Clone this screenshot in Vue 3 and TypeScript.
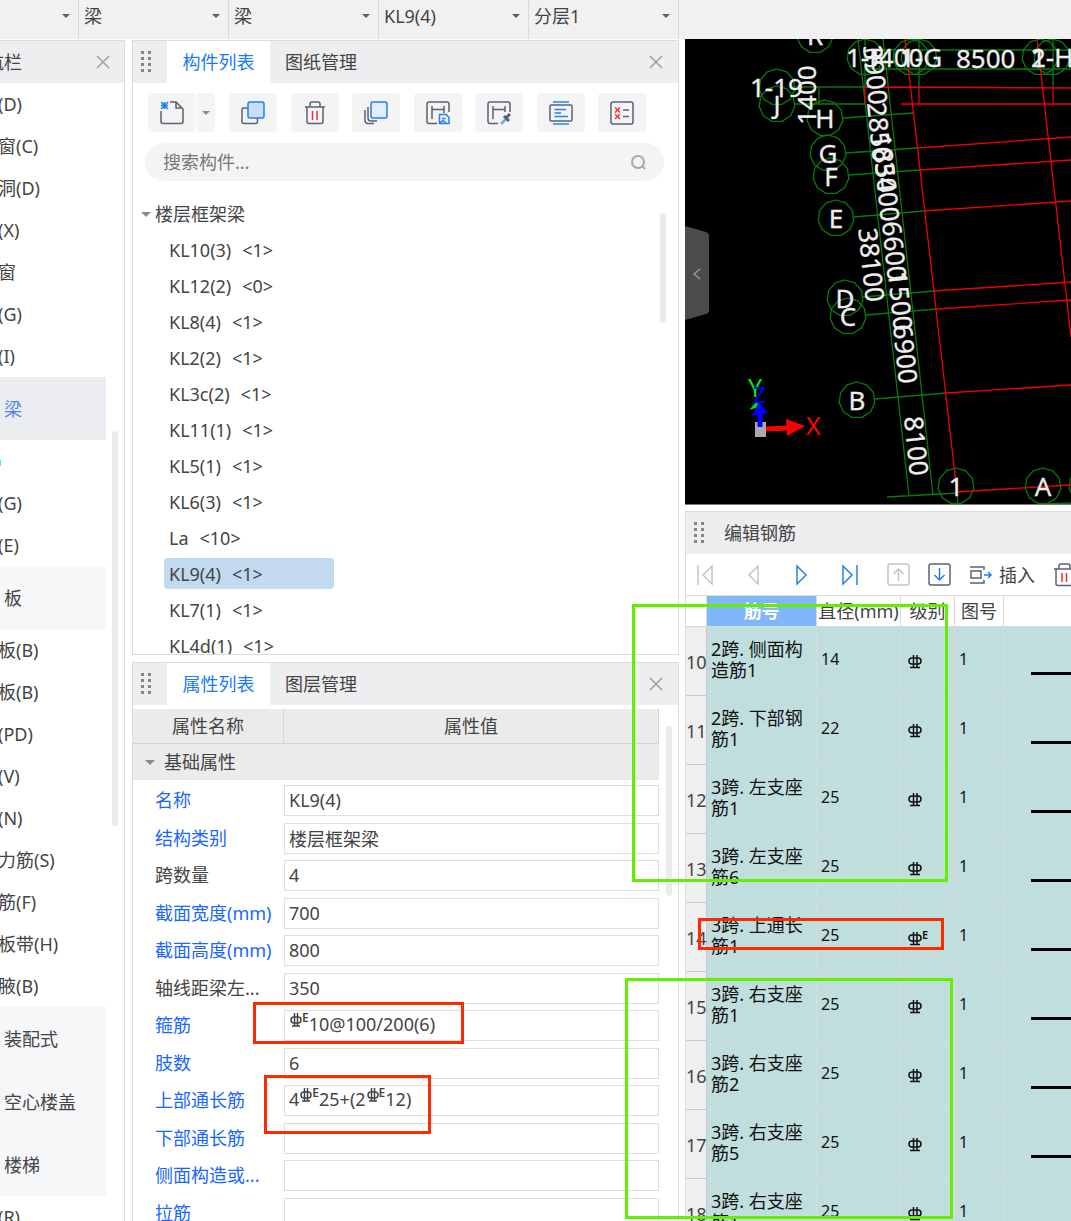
<script setup lang="ts">
import { ref } from 'vue'

interface NavItem {
  text: string
  kind: 'row' | 'group' | 'active' | 'icon'
}
interface Prop {
  name: string
  value: string
  editable: boolean
}
interface Rebar {
  no: number
  name: string[]
  diameter: number
  seismic: boolean
  shape: number
}
interface Axis {
  x: number
  y: number
  label: string
}

const selectors = ref([
  { label: '楼层', value: '' },
  { label: '构件类型', value: '梁' },
  { label: '构件种类', value: '梁' },
  { label: '构件', value: 'KL9(4)' },
  { label: '分层', value: '分层1' },
])

const row = (text: string): NavItem => ({ text, kind: 'row' })
const group = (text: string): NavItem => ({ text, kind: 'group' })
const nav: NavItem[] = [
  row('(D)'), row('窗(C)'), row('洞(D)'), row('(X)'), row('窗'), row('(G)'), row('(I)'),
  { text: '梁', kind: 'active' },
  { text: '', kind: 'icon' }, row('(G)'), row('(E)'),
  group('板'),
  row('板(B)'), row('板(B)'), row('(PD)'), row('(V)'), row('(N)'), row('力筋(S)'), row('筋(F)'), row('板带(H)'), row('腋(B)'),
  group('装配式'), group('空心楼盖'), group('楼梯'),
  row('(R)'),
]

const members = [
  ['KL10(3)', 1], ['KL12(2)', 0], ['KL8(4)', 1], ['KL2(2)', 1], ['KL3c(2)', 1], ['KL11(1)', 1],
  ['KL5(1)', 1], ['KL6(3)', 1], ['La', 10], ['KL9(4)', 1], ['KL7(1)', 1], ['KL4d(1)', 1],
] as const
const selected = ref('KL9(4)')

// "#" in a value stands for the seismic HRB400E rebar sign.
const props = ref<Prop[]>([
  { name: '名称', value: 'KL9(4)', editable: true },
  { name: '结构类别', value: '楼层框架梁', editable: true },
  { name: '跨数量', value: '4', editable: false },
  { name: '截面宽度(mm)', value: '700', editable: true },
  { name: '截面高度(mm)', value: '800', editable: true },
  { name: '轴线距梁左...', value: '350', editable: false },
  { name: '箍筋', value: '#10@100/200(6)', editable: true },
  { name: '肢数', value: '6', editable: true },
  { name: '上部通长筋', value: '4#25+(2#12)', editable: true },
  { name: '下部通长筋', value: '', editable: true },
  { name: '侧面构造或...', value: '', editable: true },
  { name: '拉筋', value: '', editable: true },
])

const bars: Rebar[] = [
  { no: 10, name: ['2跨. 侧面构', '造筋1'], diameter: 14, seismic: false, shape: 1 },
  { no: 11, name: ['2跨. 下部钢', '筋1'], diameter: 22, seismic: false, shape: 1 },
  { no: 12, name: ['3跨. 左支座', '筋1'], diameter: 25, seismic: false, shape: 1 },
  { no: 13, name: ['3跨. 左支座', '筋6'], diameter: 25, seismic: false, shape: 1 },
  { no: 14, name: ['3跨. 上通长', '筋1'], diameter: 25, seismic: true, shape: 1 },
  { no: 15, name: ['3跨. 右支座', '筋1'], diameter: 25, seismic: false, shape: 1 },
  { no: 16, name: ['3跨. 右支座', '筋2'], diameter: 25, seismic: false, shape: 1 },
  { no: 17, name: ['3跨. 右支座', '筋5'], diameter: 25, seismic: false, shape: 1 },
  { no: 18, name: ['3跨. 右支座', '筋1'], diameter: 25, seismic: false, shape: 1 },
]

const axes: Axis[] = [
  { x: 815, y: 35, label: 'R' }, { x: 777, y: 87, label: '' }, { x: 777, y: 104, label: 'J' },
  { x: 825, y: 118, label: 'H' }, { x: 828, y: 153, label: 'G' }, { x: 831, y: 176, label: 'F' },
  { x: 836, y: 218, label: 'E' }, { x: 845, y: 298, label: 'D' }, { x: 848, y: 316, label: 'C' },
  { x: 857, y: 400, label: 'B' }, { x: 956, y: 486, label: '1' }, { x: 1043, y: 486, label: 'A' },
  { x: 865, y: 57, label: '' }, { x: 911, y: 57, label: '' }, { x: 919, y: 57, label: '' },
  { x: 1040, y: 57, label: '' }, { x: 1052, y: 57, label: '' }, { x: 1087, y: 486, label: '' },
]
const ring = (a: Axis): string =>
  Array.from({ length: 11 }, (_, i) => {
    const t = (i / 11) * Math.PI * 2 - Math.PI / 2
    return `${(a.x + 18 * Math.cos(t)).toFixed(1)},${(a.y + 18 * Math.sin(t)).toFixed(1)}`
  }).join(' ')

const spans = [
  { t: '3900', x: 875, y: 75 }, { t: '2850', x: 879, y: 132 }, { t: '1850', x: 884, y: 163 },
  { t: '3400', x: 887, y: 192 }, { t: '6600', x: 894, y: 251 }, { t: '1500', x: 900, y: 301 },
  { t: '6900', x: 905, y: 354 }, { t: '8100', x: 916, y: 446 }, { t: '38100', x: 871, y: 265 },
]
const labels = [
  { t: '1-19', x: 750, y: 97 }, { t: '1-F', x: 846, y: 67 }, { t: '3400', x: 864, y: 67 },
  { t: '1-G', x: 900, y: 67 }, { t: '8500', x: 956, y: 68 }, { t: '2', x: 1031, y: 67 }, { t: '1-H', x: 1031, y: 67 },
]
</script>

<template>
  <div class="app">
    <header class="topbar">
      <label v-for="(s, i) in selectors" :key="i" class="picker" :class="{ cut: i === 0 }">
        <select v-model="s.value" :aria-label="s.label">
          <option :value="s.value">{{ s.value }}</option>
        </select>
      </label>
    </header>

    <main class="work">
      <aside class="nav">
        <div class="bar">
          <h2 class="nav-title">航栏</h2>
          <button class="close" aria-label="关闭">
            <svg width="14" height="14"><path d="M1 1L13 13M13 1L1 13" /></svg>
          </button>
        </div>
        <ul class="nav-list">
          <li v-for="(n, i) in nav" :key="i" :class="n.kind">{{ n.text }}</li>
        </ul>
        <i class="scroll nav-scroll"></i>
      </aside>

      <section class="middle">
        <div class="panel members">
          <div class="bar">
            <svg class="grip" width="11" height="22"><path d="M1.500 0V22M8.500 0V22" /></svg>
            <button class="tab on">构件列表</button>
            <button class="tab">图纸管理</button>
            <button class="close" aria-label="关闭">
              <svg width="14" height="14"><path d="M1 1L13 13M13 1L1 13" /></svg>
            </button>
          </div>

          <div class="tools">
            <div class="split">
              <button aria-label="新建">
                <svg width="24" height="24" viewBox="0 0 24 24">
                  <path class="ink" d="M1 10V20.500Q1 22.500 3 22.500H21Q23 22.500 23 20.500V8L16 1H10M16 1V7H22" />
                  <path class="blue" d="M1 1L8 8M8 1L1 8M4.500 1V8M1 4.500H8" />
                </svg>
              </button>
              <button class="more" aria-label="新建选项"><i class="caret"></i></button>
            </div>
            <div class="row-tools">
              <button aria-label="复制">
                <svg width="24" height="24" viewBox="0 0 24 24">
                  <path class="ink" d="M7 7H3Q1 7 1 9V20.500Q1 22.500 3 22.500H14.500Q16.500 22.500 16.500 20.500V17" />
                  <rect class="blue" x="7" y="1" width="16" height="16" rx="2" fill="#c9ddf5" />
                </svg>
              </button>
              <button aria-label="删除">
                <svg width="24" height="24" viewBox="0 0 24 24">
                  <path class="ink" d="M2 6H22M4 6V20.500Q4 22.500 6 22.500H18Q20 22.500 20 20.500V6M7 6V3Q7 1 9 1H15Q17 1 17 3V6" />
                  <path class="red" d="M9.500 10V19M14 10V19" />
                </svg>
              </button>
              <button aria-label="层间复制">
                <svg width="24" height="24" viewBox="0 0 24 24">
                  <path class="ink" d="M4 6V17Q4 20 7 20H13M1 9V19Q1 22.500 4 22.500H10" />
                  <rect class="blue" x="7" y="1" width="16" height="16" rx="2" fill="#e2eefe" />
                </svg>
              </button>
              <button aria-label="构件存盘">
                <svg width="24" height="24" viewBox="0 0 24 24">
                  <path class="ink" d="M23 11V3Q23 1 21 1H3Q1 1 1 3V20.500Q1 22.500 3 22.500H11M6 5V18M18 5V12M6 8.500H18" />
                  <path class="blue" d="M13.500 13.500H20L23 16.500V22.500H13.500ZM16 17.500H19.500M14 22L17 19.500L20 22" />
                </svg>
              </button>
              <button aria-label="构件提取">
                <svg width="24" height="24" viewBox="0 0 24 24">
                  <path class="ink" d="M23 11V3Q23 1 21 1H3Q1 1 1 3V20.500Q1 22.500 3 22.500H11M6 5V18M18 5V11M6 8.500H18" />
                  <path d="M14 23L19 18" stroke="#7aa5e6" stroke-width="2.500" />
                  <path d="M17 15L22 20M18 18L23 13" stroke="#596273" stroke-width="3" />
                </svg>
              </button>
              <button aria-label="图元存盘">
                <svg width="24" height="24" viewBox="0 0 24 24">
                  <rect class="ink" x="1" y="4" width="22" height="16" rx="1" />
                  <path class="blue" d="M4 1H20M4 23H20M5.500 8.500H17M5.500 12H12M5.500 15.500H19" />
                </svg>
              </button>
              <button aria-label="检查">
                <svg width="24" height="24" viewBox="0 0 24 24">
                  <rect class="ink" x="1" y="1" width="22" height="22" rx="2" />
                  <path class="ink" d="M13 9H19M13 15.500H19" />
                  <path class="red" d="M5 6.500L10 11.500M10 6.500L5 11.500M5 13L10 18M10 13L5 18" />
                </svg>
              </button>
            </div>
          </div>

          <label class="search">
            <input type="text" placeholder="搜索构件..." aria-label="搜索构件" />
            <svg width="15" height="15"><circle cx="7" cy="7" r="6" /><path d="M11 11L14 14" /></svg>
          </label>

          <div class="tree">
            <div class="root"><i class="caret"></i>楼层框架梁</div>
            <ul>
              <li v-for="m in members" :key="m[0]">
                <button :class="{ on: m[0] === selected }" @click="selected = m[0]">
                  <span>{{ m[0] }}</span><span>&lt;{{ m[1] }}&gt;</span>
                </button>
              </li>
            </ul>
            <i class="scroll tree-scroll"></i>
          </div>
        </div>

        <div class="panel props">
          <div class="bar">
            <svg class="grip" width="11" height="22"><path d="M1.500 0V22M8.500 0V22" /></svg>
            <button class="tab on">属性列表</button>
            <button class="tab">图层管理</button>
            <button class="close" aria-label="关闭">
              <svg width="14" height="14"><path d="M1 1L13 13M13 1L1 13" /></svg>
            </button>
          </div>
          <div class="prop-area">
            <table class="prop-table">
              <thead>
                <tr><th class="name-col">属性名称</th><th>属性值</th></tr>
              </thead>
              <tbody>
                <tr class="category"><td colspan="2"><i class="caret"></i>基础属性</td></tr>
                <tr v-for="(p, i) in props" :key="p.name" class="prop">
                  <td :class="{ link: p.editable }"><label :for="'prop-' + i">{{ p.name }}</label></td>
                  <td>
                    <div v-if="p.value.includes('#')" :id="'prop-' + i" class="field rich" role="textbox" contenteditable="true" :aria-label="p.name">
                      <template v-for="(part, k) in p.value.split('#')" :key="k">
                        <span v-if="k > 0" class="sign">
                          <svg width="12" height="14" viewBox="0 0 12 14"><rect x="1" y="4" width="10" height="6" rx="3" /><path d="M4.500 0V13M7.500 0V13M2 13H10" /></svg><small>E</small>
                        </span><span>{{ part }}</span>
                      </template>
                    </div>
                    <input v-else :id="'prop-' + i" v-model="p.value" class="field" type="text" />
                  </td>
                </tr>
              </tbody>
            </table>
            <i class="scroll prop-scroll"></i>
          </div>
        </div>
      </section>

      <section class="right">
        <div class="view">
          <svg class="cad" width="100%" height="465">
            <g transform="translate(-685 -39)">
              <g class="green">
                <path d="M858 39L909 496M883 39L933 495M865 39V87M919 39V87M1053 39V87M865 50H1071M865 69H1071M793 87H865M795 104H865M819 87V104M843 118L913 113M846 153L917 148M849 175L920 170M854 217L924 211M863 297L934 291M866 315L937 309M875 399L946 393M887 497L957 493M957 493L958 504M1045 504L1071 503" />
                <polygon v-for="(a, i) in axes" :key="i" :points="ring(a)" />
              </g>
              <path class="dark-red" d="M919 87V104M1053 87V104" />
              <path class="line-red" d="M905 39L957 492M1037 39L1071 337M865 87V104M865 87L1071 88M901 104H1071M917 148L1071 137M920 170L1071 160M924 211L1071 201M934 291L1071 282M937 309L1071 300M946 393L1071 385M957 492L1071 485" />
              <g class="cad-text">
                <text v-for="a in axes" :key="a.label + a.x" :x="a.x" :y="a.y + 10" text-anchor="middle">{{ a.label }}</text>
                <text v-for="l in labels" :key="l.t" :x="l.x" :y="l.y">{{ l.t }}</text>
                <text v-for="s in spans" :key="s.t + s.y" y="9" text-anchor="middle" :transform="`translate(${s.x} ${s.y}) rotate(84)`">{{ s.t }}</text>
                <text y="9" text-anchor="middle" transform="translate(807 95) rotate(-90)">1400</text>
              </g>
              <path d="M749 410L757 401L759 407Z" fill="#00dd00" />
              <text class="axis-y" x="748" y="397">Y</text>
              <rect x="755" y="422" width="11" height="15" fill="#aaa" />
              <path d="M760 412V427" stroke="#00f" stroke-width="5" />
              <path d="M752 416L759 402L768 413Z" fill="#00f" />
              <text class="axis-z" x="753" y="403">Z</text>
              <path d="M766 429L788 428" stroke="#f00" stroke-width="5" />
              <path d="M786 419L805 426L787 436Z" fill="#f00" />
              <text class="axis-x" x="806" y="435">X</text>
            </g>
          </svg>
          <button class="collapse" aria-label="收起">
            <svg width="24" height="94">
              <path d="M0 0L21 6Q24 7 24 10V84Q24 87 21 88L0 94Z" fill="#4b4b4b" />
              <path d="M15 43L9 48L15 53" stroke="#999" stroke-width="1.500" fill="none" />
            </svg>
          </button>
        </div>

        <div class="rebar">
          <div class="bar">
            <svg class="grip" width="11" height="22"><path d="M1.500 0V22M8.500 0V22" /></svg>
            <h2>编辑钢筋</h2>
          </div>
          <div class="rebar-tools">
            <button class="off" aria-label="首行"><svg width="20" height="24"><path d="M3 2V22M17 3V21L8 12Z" /></svg></button>
            <button class="off" aria-label="上一行"><svg width="20" height="24"><path d="M15 3V21L6 12Z" /></svg></button>
            <button class="go" aria-label="下一行"><svg width="20" height="24"><path d="M6 3V21L15 12Z" /></svg></button>
            <button class="go" aria-label="末行"><svg width="20" height="24"><path d="M4 3V21L13 12ZM18 2V22" /></svg></button>
            <button class="off box" aria-label="上移">
              <svg width="24" height="24"><rect x="1" y="1" width="21" height="21" rx="2" /><path d="M11.500 18V6M6.500 11L11.500 6L16.500 11" /></svg>
            </button>
            <button class="go box" aria-label="下移">
              <svg width="24" height="24"><rect x="1" y="1" width="21" height="21" rx="2" stroke="#596273" /><path d="M11.500 5V17M6.500 12L11.500 17L16.500 12" /></svg>
            </button>
            <button class="insert">
              <svg width="24" height="20"><path class="ink" d="M1 2H15V5M1 18H15V15M2 6H12V13H2Z" /><path class="blue" d="M15 10H22M19 7L22 10L19 13" /></svg>插入
            </button>
            <button aria-label="删除">
              <svg width="24" height="24" viewBox="0 0 24 24">
                <path class="ink" d="M1 6H23M3 6V20.500Q3 22.500 5 22.500H18Q20 22.500 20 20.500V6M6 6V3Q6 1 8 1H15Q17 1 17 3V6" />
                <path class="red" d="M9 10V19M13.500 10V19" />
              </svg>
            </button>
          </div>
          <table class="bars">
            <colgroup><col class="c-no" /><col class="c-name" /><col class="c-dia" /><col class="c-grade" /><col class="c-shape" /><col /></colgroup>
            <thead>
              <tr><th></th><th class="on">筋号</th><th>直径(mm)</th><th>级别</th><th>图号</th><th></th></tr>
            </thead>
            <tbody>
              <tr v-for="b in bars" :key="b.no">
                <th scope="row">{{ b.no }}</th>
                <td class="bar-name"><div>{{ b.name[0] }}<br />{{ b.name[1] }}</div></td>
                <td>{{ b.diameter }}</td>
                <td class="grade">
                  <svg width="14" height="15" viewBox="0 0 14 15"><rect x="1" y="4" width="12" height="6" rx="3" /><path d="M5.500 1V14M9 1V14M2 13.500H12" /></svg><small v-if="b.seismic">E</small>
                </td>
                <td>{{ b.shape }}</td>
                <td class="sketch"><i></i></td>
              </tr>
            </tbody>
          </table>
        </div>
      </section>
    </main>

    <i class="mark green-mark m1"></i>
    <i class="mark green-mark m2"></i>
    <i class="mark red-mark m3"></i>
    <i class="mark red-mark m4"></i>
    <i class="mark red-mark m5"></i>
  </div>
</template>

<style>
body {
  margin: 0;
  background: #fff;
}
</style>

<style scoped>
.app {
  position: relative;
  display: flex;
  flex-direction: column;
  height: 100vh;
  overflow: hidden;
  font: 18px/24px "Noto Sans", "Noto Sans CJK SC", sans-serif;
  color: #444;
}
.app * {
  box-sizing: border-box;
}
button,
input,
select {
  font: inherit;
  color: inherit;
  border: 0;
  padding: 0;
  margin: 0;
  background: none;
}
ul {
  list-style: none;
  margin: 0;
  padding: 0;
}
h2 {
  margin: 0;
  font: inherit;
}
svg {
  display: block;
  fill: none;
}
.ink {
  stroke: #596273;
  stroke-width: 1.5;
}
.blue {
  stroke: #2080f5;
  stroke-width: 1.5;
}
.red {
  stroke: #e5393f;
  stroke-width: 1.5;
}

.topbar {
  display: flex;
  flex: none;
  height: 39px;
  background: #f1f1f1;
}
.picker {
  position: relative;
  flex: none;
  width: 150px;
  border-right: 1px solid #d9d9d9;
}
.picker.cut {
  width: 79px;
}
.picker select {
  width: 100%;
  height: 32px;
  padding-left: 5px;
  appearance: none;
  outline: 0;
}
.picker::after {
  content: "";
  position: absolute;
  right: 8px;
  top: 14px;
  border: 4px solid transparent;
  border-top-color: #596273;
  border-bottom: 0;
}
.caret {
  border: 5px solid transparent;
  border-top-color: #8a8a8a;
  border-bottom: 0;
}

.work {
  display: flex;
  flex: 1;
  min-height: 0;
}
.bar {
  display: flex;
  align-items: center;
  flex: none;
  height: 42px;
  background: #eeeef0;
}
.close {
  margin-left: auto;
  padding: 4px;
}
.close svg {
  stroke: #a0a0a0;
  stroke-width: 1.5;
}
.grip {
  margin: 0 15px 0 8px;
  stroke: #858585;
  stroke-width: 3;
  stroke-dasharray: 3 3;
}
.scroll {
  position: absolute;
  width: 6px;
  border-radius: 3px;
  background: #ebebeb;
}

.nav {
  position: relative;
  flex: none;
  width: 125px;
  margin-top: 1px;
  overflow: hidden;
  border: solid #dcdcdc;
  border-width: 1px 1px 0 0;
}
.nav-title {
  margin-left: -14px;
}
.nav .close {
  margin-right: 10px;
}
.nav-list {
  width: 106px;
}
.nav-list li {
  height: 42px;
  line-height: 42px;
  text-indent: -2px;
  white-space: nowrap;
}
.nav-list .group,
.nav-list .active {
  height: 63px;
  line-height: 64px;
  text-indent: 4px;
  background: #f5f7f9;
}
.nav-list .active {
  background: #ebecf0;
  color: #5585e8;
}
.nav-list .icon::before {
  content: "";
  display: block;
  width: 1px;
  height: 6px;
  border-radius: 0 3px 3px 0;
  background: #30eef0;
  transform: translateY(20px);
}
.nav-scroll {
  right: 6px;
  top: 390px;
  height: 395px;
}

.middle {
  display: flex;
  flex-direction: column;
  flex: none;
  gap: 7px;
  width: 547px;
  margin: 1px 6px 0 7px;
}
.panel {
  border: 1px solid #dcdcdc;
  overflow: hidden;
}
.members {
  display: flex;
  flex-direction: column;
  flex: none;
  height: 615px;
}
.props {
  flex: 1;
  min-height: 0;
  border-bottom: 0;
}
.tab {
  height: 42px;
  padding: 0 15px;
}
.tab.on {
  width: 103px;
  background: #fff;
  color: #1a7af8;
}
.panel .close {
  margin-right: 11px;
}

.tools {
  display: flex;
  flex: none;
  gap: 14px;
  padding: 10px 32px 0 15px;
}
.tools button {
  display: flex;
  align-items: center;
  justify-content: center;
  width: 48px;
  height: 39px;
  border-radius: 4px;
  background: #f4f4f4;
}
.split {
  display: flex;
  gap: 1px;
}
.tools .more {
  width: 18px;
}
.more .caret {
  border-width: 4px 4px 0;
}
.row-tools {
  display: flex;
  flex: 1;
  justify-content: space-between;
}
.search {
  display: flex;
  align-items: center;
  flex: none;
  height: 38px;
  margin: 11px 14px 0 12px;
  padding: 0 18px;
  border-radius: 19px;
  background: #f4f4f4;
}
.search input {
  flex: 1;
  outline: 0;
}
.search input::placeholder {
  color: #777;
  opacity: 1;
}
.search svg {
  stroke: #aaa;
  stroke-width: 2;
}

.tree {
  position: relative;
  flex: 1;
  min-height: 0;
  margin-top: 15px;
  overflow: hidden;
}
.root {
  display: flex;
  align-items: center;
  gap: 4px;
  height: 36px;
  padding-left: 8px;
}
.tree li {
  height: 36px;
  padding: 2px 0 2px 31px;
}
.tree button {
  display: flex;
  align-items: center;
  gap: 11px;
  width: 170px;
  height: 31px;
  padding-left: 5px;
  border-radius: 4px;
}
.tree button.on {
  background: #c2d9f0;
}
.tree-scroll {
  right: 12px;
  top: 17px;
  height: 110px;
}

.prop-area {
  position: relative;
  padding: 4px 19px 0 0;
}
.prop-table {
  width: 100%;
  table-layout: fixed;
  border-spacing: 0;
}
.prop-table th {
  height: 35px;
  padding: 0;
  font-weight: 400;
  background: #ebebeb;
  border: solid #d6d6d6;
  border-width: 0 1px 1px 0;
}
.name-col {
  width: 151px;
}
.prop-table td {
  padding: 0;
}
.category td {
  height: 36px;
  padding-left: 12px;
  background: #ebebeb;
}
.category .caret {
  display: inline-block;
  margin-right: 9px;
  vertical-align: 4px;
}
.prop td {
  height: 37px;
  padding-bottom: 1px;
  vertical-align: bottom;
}
.prop:nth-child(odd) td {
  height: 38px;
}
.prop label {
  display: block;
  padding-left: 22px;
  line-height: 31px;
  white-space: nowrap;
}
.link {
  color: #1a66ff;
}
.field {
  display: block;
  width: 100%;
  height: 31px;
  padding: 0 4px 2px;
  border: 1px solid #dedede;
  outline: 0;
}
.rich {
  display: flex;
  line-height: 27px;
}
.sign {
  display: flex;
  padding: 2px 0 0 1px;
}
.sign svg {
  stroke: #444;
  stroke-width: 1.5;
}
.sign small {
  font-size: 12px;
  line-height: 10px;
  font-weight: 600;
}
.prop-scroll {
  right: 6px;
  top: 21px;
  height: 170px;
}

.right {
  display: flex;
  flex-direction: column;
  flex: 1;
  min-width: 0;
}
.view {
  position: relative;
  flex: none;
  background: #000;
  border-bottom: 1px solid #777;
  margin-bottom: 6px;
}
.cad {
  overflow: hidden;
}
.green {
  stroke: #077a0d;
  stroke-width: 1.3;
}
.line-red {
  stroke: #e00;
  stroke-width: 1.3;
}
.dark-red {
  stroke: #900;
  stroke-width: 2;
}
.cad-text {
  fill: #eee;
  stroke: #eee;
  stroke-width: 0.3;
  font-size: 26px;
}
.axis-x,
.axis-y {
  font-size: 25px;
  fill: #f00;
}
.axis-y {
  fill: #0e0;
}
.axis-z {
  font-size: 22px;
  fill: #00f;
}
.collapse {
  position: absolute;
  left: 0;
  top: 187px;
}
.rebar {
  flex: 1;
  min-height: 0;
  overflow: hidden;
  border: solid #dcdcdc;
  border-width: 1px 0 0 1px;
}
.rebar h2 {
  margin-left: 4px;
}
.rebar-tools {
  display: flex;
  align-items: center;
  height: 41px;
  overflow: hidden;
  padding-left: 9px;
}
.rebar-tools button {
  flex: none;
  margin-right: 28px;
}
.rebar-tools svg {
  stroke-width: 1.5;
}
.rebar-tools .off {
  stroke: #c4c4c4;
}
.rebar-tools .go {
  stroke: #2080f5;
}
.rebar-tools .box {
  margin-right: 17px;
}
.rebar-tools .insert {
  display: flex;
  align-items: center;
  gap: 6px;
  margin-right: 18px;
}
.bars {
  width: 100%;
  table-layout: fixed;
  border-spacing: 0;
  border-top: 1px solid #dcdcdc;
}
.c-no {
  width: 21px;
}
.c-name {
  width: 110px;
}
.c-dia {
  width: 84px;
}
.c-grade {
  width: 54px;
}
.c-shape {
  width: 49px;
}
.bars th,
.bars td {
  padding: 0;
  border: solid #dadada;
  border-width: 0 1px 1px 0;
}
.bars th:last-child,
.bars td:last-child {
  border-right: 0;
}
.bars th {
  height: 31px;
  font-weight: 400;
  white-space: nowrap;
}
.bars th.on {
  background: #7fb7f8;
  color: #fff;
  font-weight: 700;
}
.bars td {
  height: 69px;
  padding: 0 0 4px 4px;
  font-size: 16px;
  color: #111;
  background: #c1dedf;
}
.bars tbody th {
  padding-top: 2px;
  background: #efefef;
  border-color: #c8c8c8;
}
.bars .bar-name {
  padding-bottom: 2px;
  font-size: 18px;
  line-height: 21px;
  white-space: nowrap;
}
.bars .grade {
  padding-left: 7px;
}
.grade svg {
  display: inline-block;
  stroke: #111;
  stroke-width: 1.5;
  vertical-align: -4px;
}
.grade small {
  font-size: 11px;
  font-weight: 600;
  vertical-align: 3px;
}
.sketch i {
  display: block;
  height: 3px;
  margin: 28px 0 0 23px;
  background: #000;
}

.mark {
  position: absolute;
  border: 3px solid;
  pointer-events: none;
}
.green-mark {
  border-color: #62f000;
}
.red-mark {
  border-color: #ff2a00;
}
.m1 {
  left: 632px;
  top: 604px;
  width: 316px;
  height: 278px;
}
.m2 {
  left: 625px;
  top: 978px;
  width: 328px;
  height: 241px;
}
.m3 {
  left: 698px;
  top: 918px;
  width: 246px;
  height: 32px;
}
.m4 {
  left: 253px;
  top: 1002px;
  width: 211px;
  height: 42px;
}
.m5 {
  left: 264px;
  top: 1075px;
  width: 167px;
  height: 59px;
}
</style>
